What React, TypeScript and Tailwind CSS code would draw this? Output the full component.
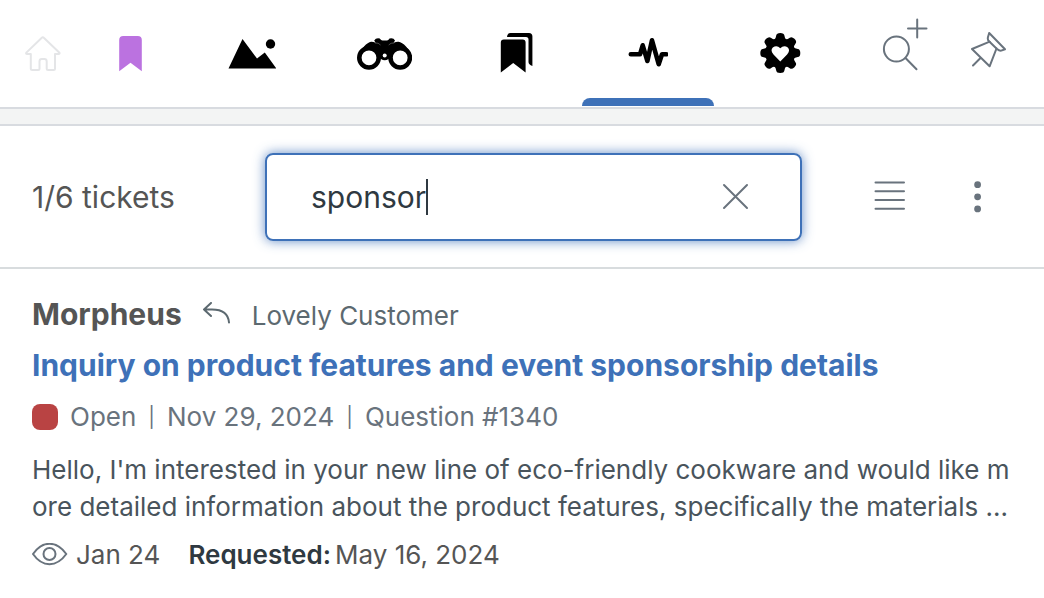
import { useState } from "react"
import type { ReactNode } from "react"

const HomeIcon = () => (
  <svg className="h-9 w-9" viewBox="0 0 36 36" fill="none" stroke="currentColor" strokeWidth="2" strokeLinejoin="round" aria-hidden="true">
    <path d="M16.8 1.8Q17.8 .8 18.8 1.8L34.2 16.4Q35.2 17.9 33.4 17.9H30V32.5Q30 34 28.5 34H23.2Q21.7 34 21.7 32.5V25.4Q21.7 23 19.3 23H16.9Q14.5 23 14.5 25.4V32.5Q14.5 34 13 34H7.3Q5.8 34 5.8 32.5V17.9H2.2Q.4 17.9 1.6 16.4Z" />
  </svg>
)

const BookmarkIcon = () => (
  <svg className="h-9 w-6" viewBox="0 0 24 36" fill="currentColor" aria-hidden="true">
    <path d="M1.2 4Q1.2 0 5.2 0H19.8Q23.8 0 23.8 4V35.3L12.5 26.8L1.2 35.3Z" />
  </svg>
)

const MountainIcon = () => (
  <svg className="h-9 w-12" viewBox="0 0 48 36" fill="currentColor" aria-hidden="true">
    <path d="M.5 33.6L14.5 4L29 23.5L36.8 17.6L48.5 33.6Z" />
    <circle cx="42.5" cy="9" r="4.7" />
  </svg>
)

const BinocularsIcon = () => (
  <svg className="h-9 w-14" viewBox="0 0 56 36" aria-hidden="true">
    <path
      fill="currentColor"
      d="M2 21Q3.5 16 8 11.5Q12 7.2 15 6.8Q17 6.6 19.6 7.8L18.2 5.4Q20 2.4 23.8 3.4Q25 5.4 26.5 5.4H31Q32.3 5.4 33.5 3.4Q37.5 2.4 39 5.4L37.6 7.8Q40.5 6.6 42.5 6.8Q46 7.2 50 11.5Q54 16 55.5 21L45 30L37 23Q34 22 32.5 24Q28.7 26.5 25 24Q23.5 22 21 23L11 30Z"
    />
    <circle cx="13" cy="22.8" r="9.7" fill="#fff" stroke="currentColor" strokeWidth="4.6" />
    <circle cx="44.2" cy="22.8" r="9.7" fill="#fff" stroke="currentColor" strokeWidth="4.6" />
    <circle cx="28.7" cy="20.5" r="2" fill="#fff" />
    <path d="M19 8Q22.5 7.5 24.5 10M38.2 8Q34.7 7.5 32.7 10" stroke="#fff" strokeWidth=".3" fill="none" />
  </svg>
)

const BookmarksIcon = () => (
  <svg className="h-10 w-8 overflow-visible" viewBox="0 0 32 40" fill="currentColor" aria-hidden="true">
    <path d="M.8 9.5Q.8 6.5 3.8 6.5H22.6Q25.6 6.500 25.6 9.5V39.5L13.2 30L.8 39.5Z" />
    <path d="M7 4Q7.5 0 10.5 0H29Q32.4 0 32.4 3.500V33Q28.5 31.5 28.5 29V6.5Q28.5 4 26 4Z" />
  </svg>
)

const PulseIcon = () => (
  <svg className="h-9 w-10" viewBox="0 0 40 36" fill="none" stroke="currentColor" strokeWidth="4.6" strokeLinecap="round" strokeLinejoin="round" aria-hidden="true">
    <path d="M2.8 19.3H12L14.7 10.3L19.4 26L24 5.3L30.7 29.2L34 19.3H38.3" />
  </svg>
)

const teeth = [0, 45, 90, 135, 180, 225, 270, 315]

const GearHeartIcon = () => (
  <svg className="h-10 w-10 overflow-visible" viewBox="0 0 40 40" fill="currentColor" aria-hidden="true">
    <circle cx="20.3" cy="20" r="14.8" />
    {teeth.map((angle) => (
      <path
        key={angle}
        d="M14 7Q16 5.5 16.2 2.5Q16.5 0 20.3 0T24.4 2.5Q24.6 5.5 26.6 7Z"
        transform={`rotate(${angle} 20.3 20)`}
      />
    ))}
    <path fill="#fff" d="M20.3 28.5L13.5 21.5Q10 17.5 12.8 14.5Q16.8 11.5 20.3 15.3Q23.8 11.5 27.8 14.5Q30.6 17.5 27.1 21.5Z" />
  </svg>
)

const SearchPlusIcon = () => (
  <svg className="h-[54px] w-[46px]" viewBox="0 0 46 54" fill="none" stroke="currentColor" strokeWidth="2" strokeLinecap="round" aria-hidden="true">
    <circle cx="14.4" cy="32" r="12.5" />
    <path d="M23.5 41L34.5 52.3M35.2 2.5V20.5M26 11.5H44.5" />
  </svg>
)

const PinIcon = () => (
  <svg className="h-9 w-9" viewBox="0 0 36 36" fill="none" stroke="currentColor" strokeWidth="2" strokeLinecap="round" strokeLinejoin="round" aria-hidden="true">
    <path d="M3 33.5L10 26.5M19.7 9.7L2 17L19.6 34.3L26.5 16.5" />
    <path d="M19.2 1L35 17.3L31.2 18.6Q29.5 19 27 17L19 9.3Q17.300 7.6 18 5Z" />
  </svg>
)

const CloseIcon = () => (
  <svg className="h-7 w-7" viewBox="0 0 28 28" stroke="currentColor" strokeWidth="2" strokeLinecap="round" aria-hidden="true">
    <path d="M2 2L25 25M25 2L2 25" />
  </svg>
)

const ListIcon = () => (
  <svg className="h-8 w-8" viewBox="0 0 32 32" stroke="currentColor" strokeWidth="2" strokeLinecap="round" aria-hidden="true">
    <path d="M1.5 1.500H30M1.5 10.200H30M1.5 19H30M1.5 27.800H30" />
  </svg>
)

const MoreIcon = () => (
  <svg className="h-8 w-2" viewBox="0 0 8 32" fill="currentColor" aria-hidden="true">
    <circle cx="3.6" cy="3.7" r="3.4" />
    <circle cx="3.6" cy="15.8" r="3.4" />
    <circle cx="3.6" cy="27.9" r="3.4" />
  </svg>
)

const ReplyIcon = () => (
  <svg className="h-6 w-7" viewBox="0 0 28 24" fill="none" stroke="currentColor" strokeWidth="2" strokeLinecap="round" strokeLinejoin="round" aria-hidden="true">
    <path d="M9 1L2 7.5L9 14M2 7.5H10Q26 7.500 27 20.5" />
  </svg>
)

const EyeIcon = () => (
  <svg className="h-6 w-9 shrink-0" viewBox="0 0 36 24" fill="none" stroke="currentColor" strokeWidth="2" aria-hidden="true">
    <path d="M1 11Q8 .8 17.5 .8T34.3 11Q27 21.2 17.5 21.2T1 11Z" strokeLinejoin="round" />
    <circle cx="17.5" cy="11" r="6" />
  </svg>
)

const tabs: { name: string; icon: () => ReactNode; active?: boolean }[] = [
  { name: "Landscape", icon: MountainIcon },
  { name: "Watch", icon: BinocularsIcon },
  { name: "Bookmarks", icon: BookmarksIcon },
  { name: "Activity", icon: PulseIcon, active: true },
  { name: "Preferences", icon: GearHeartIcon },
]

function TopNav() {
  return (
    <nav className="flex h-[109px] items-stretch border-b-2 border-[#d8dbe0]">
      <button aria-label="Home" className="flex w-[86px] items-center justify-center text-[#e4e5e7]">
        <HomeIcon />
      </button>
      <button aria-label="Bookmark" className="mr-3 flex w-[88px] items-center justify-center text-[#bb72e0]">
        <BookmarkIcon />
      </button>
      {tabs.map((tab) => (
        <button key={tab.name} aria-label={tab.name} className="flex flex-1 flex-col text-black">
          <span className="flex w-full flex-1 items-center justify-center pt-2">
            <tab.icon />
          </span>
          <span className={`mb-px h-2 w-full rounded-t-lg ${tab.active ? "bg-[#3e71b8]" : ""}`} />
        </button>
      ))}
      <button aria-label="Add search" className="flex w-[118px] items-start justify-center pt-[17px] text-[#69737d]">
        <SearchPlusIcon />
      </button>
      <button aria-label="Pin" className="mr-8 flex w-12 items-start justify-center pt-8 text-[#69737d]">
        <PinIcon />
      </button>
    </nav>
  )
}

function Toolbar() {
  const [query, setQuery] = useState("sponsor")

  return (
    <div className="flex items-center border-b-2 border-[#d8dcde] pt-[27px] pr-[58px] pb-[26px] pl-8 text-[#69737d]">
      <p className="w-[233px] shrink-0 text-[30px] leading-9 text-[#555555]">1/6 tickets</p>
      <label className="flex h-[88px] flex-1 items-center rounded-lg border-2 border-[#3e71b8] pr-[50px] pl-11 shadow-[0_0_12px_#3e71b8cc]">
        <input
          aria-label="Search tickets"
          value={query}
          onChange={(e) => setQuery(e.target.value)}
          className="text-[30px] leading-9 text-[#2f3941] caret-transparent outline-none [field-sizing:content]"
        />
        <span className="h-9 w-0.5 bg-[#2f3941]" />
        <button aria-label="Clear search" className="ml-auto" onClick={() => setQuery("")}>
          <CloseIcon />
        </button>
      </label>
      <button aria-label="List view" className="ml-[72px]">
        <ListIcon />
      </button>
      <button aria-label="More options" className="ml-16 px-1">
        <MoreIcon />
      </button>
    </div>
  )
}

function Ticket() {
  return (
    <article className="px-8 pt-[27px] pr-5">
      <header className="flex items-center">
        <span className="text-[30px] leading-9 font-bold text-[#555555]">Morpheus</span>
        <span className="ml-5 text-[#5c6970]">
          <ReplyIcon />
        </span>
        <span className="ml-[22px] self-end text-[26px] leading-8 text-[#5c6970]">Lovely Customer</span>
      </header>
      <h2 className="mt-[13px] text-[30px] leading-10 font-bold text-[#3e71b8]">
        <a href="#1340">Inquiry on product features and event sponsorship details</a>
      </h2>
      <div className="mt-[14px] flex items-center gap-3 text-[26px] leading-9 text-[#69737d]">
        <span className="size-[26px] rounded-lg bg-[#b94343]" />
        <span>Open</span>
        <span className="text-xl">|</span>
        <span>Nov 29, 2024</span>
        <span className="text-xl">|</span>
        <span>Question #1340</span>
      </div>
      <p className="mt-4 text-[26px] leading-[37px] break-all text-[#49545c]">
        Hello, I'm interested in your new line of eco-friendly cookware and would like m<wbr />ore detailed information
        about the product features, specifically the materials ...
      </p>
      <footer className="mt-3 flex items-center text-[26px] leading-9 text-[#555555]">
        <span className="text-[#69737d]">
          <EyeIcon />
        </span>
        <span className="ml-2">Jan 24</span>
        <span className="ml-7 font-semibold text-[#2f3941]">Requested:</span>
        <span className="ml-1">May 16, 2024</span>
      </footer>
    </article>
  )
}

export default function App() {
  return (
    <main className="min-h-screen bg-white font-[Inter,sans-serif]">
      <TopNav />
      <div className="h-[17px] border-b-2 border-[#d8dbe0] bg-[#f3f4f4]" />
      <Toolbar />
      <Ticket />
    </main>
  )
}
